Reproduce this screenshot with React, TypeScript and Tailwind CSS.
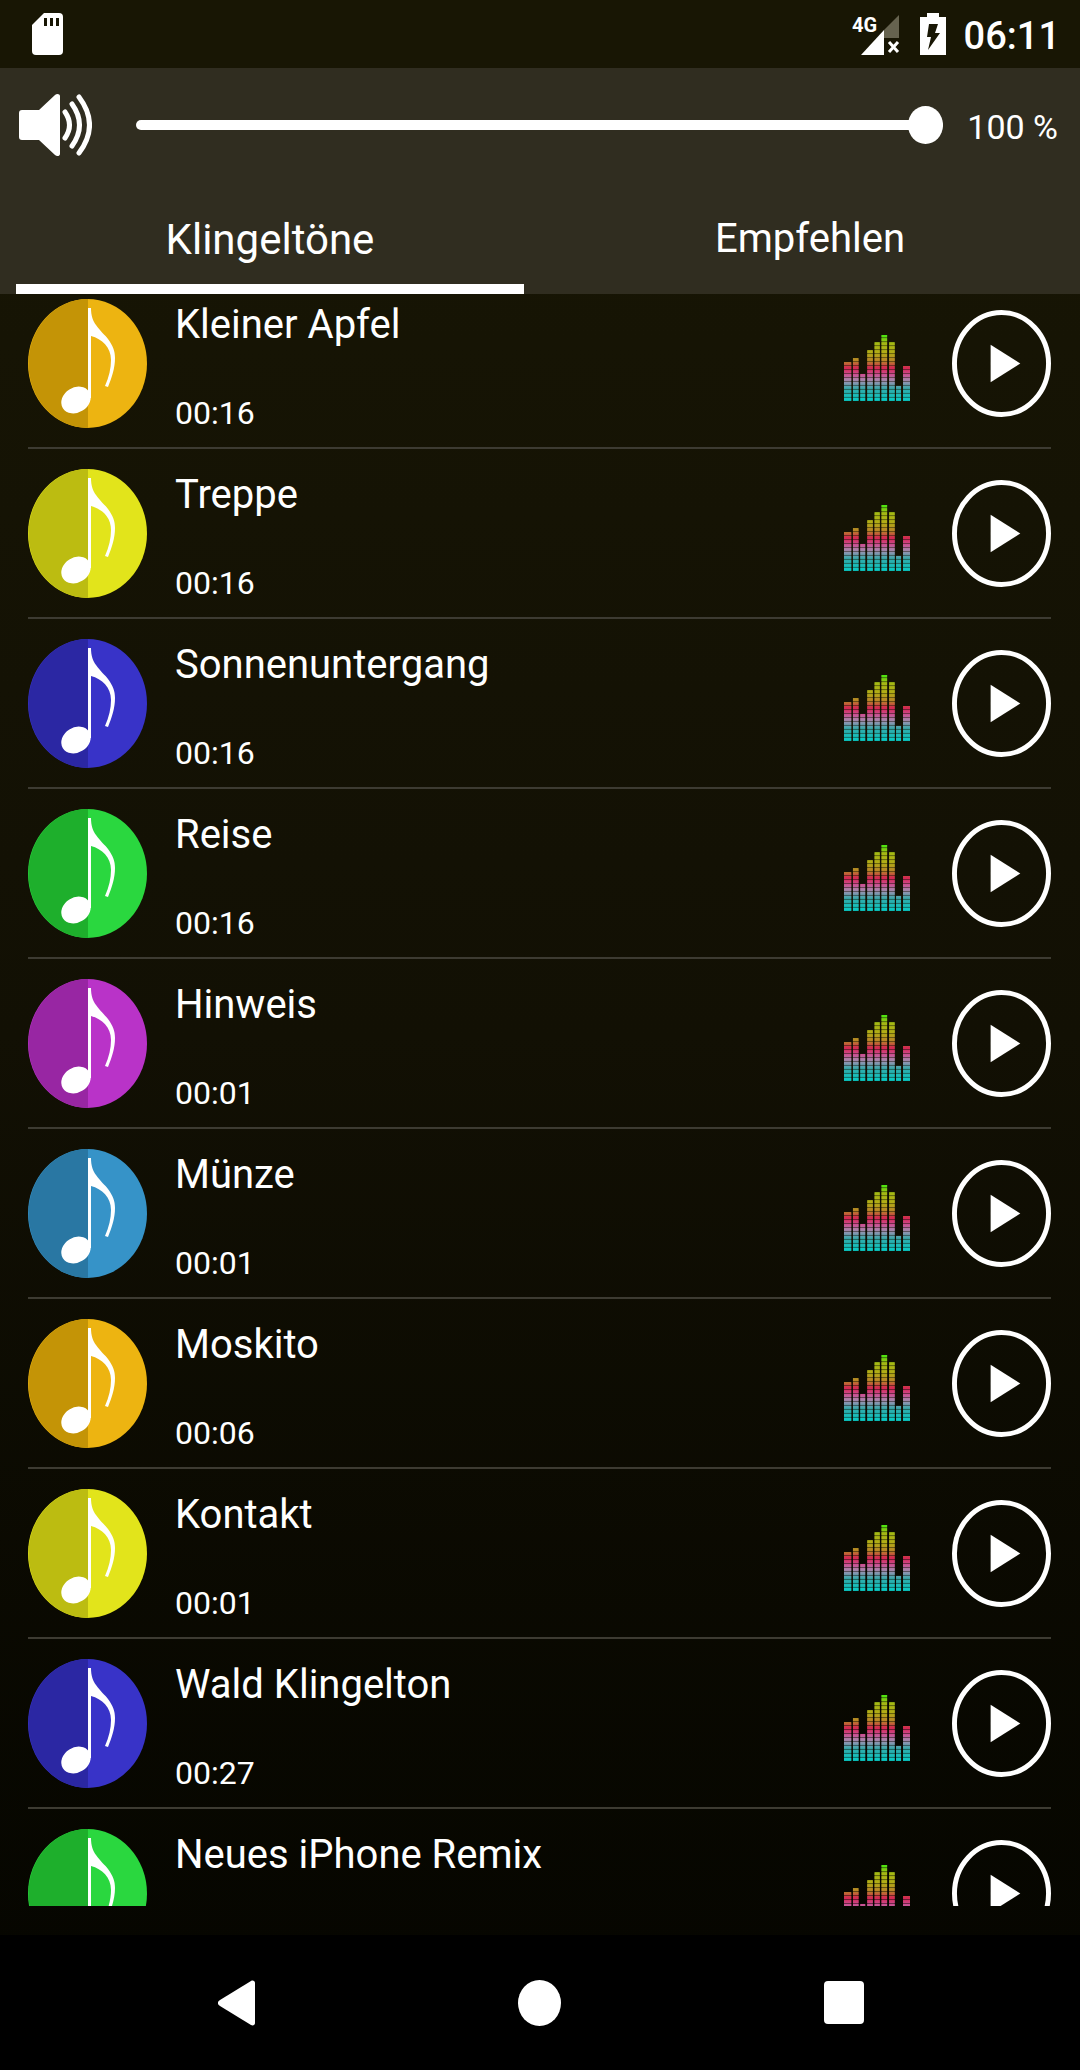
import { useId, useState } from "react";

interface Ringtone {
  name: string;
  duration?: string;
  dark: string;
  light: string;
}

const AMBER = { dark: "#c49406", light: "#edb411" };
const YELLOW = { dark: "#bcbc11", light: "#e2e41b" };
const BLUE = { dark: "#2b27a3", light: "#3833c8" };
const GREEN = { dark: "#1eaf2c", light: "#2ad73f" };
const PURPLE = { dark: "#9826a3", light: "#b933c8" };
const SKY = { dark: "#2977a3", light: "#3693c8" };

const ringtones: Ringtone[] = [
  { name: "Kleiner Apfel", duration: "00:16", ...AMBER },
  { name: "Treppe", duration: "00:16", ...YELLOW },
  { name: "Sonnenuntergang", duration: "00:16", ...BLUE },
  { name: "Reise", duration: "00:16", ...GREEN },
  { name: "Hinweis", duration: "00:01", ...PURPLE },
  { name: "Münze", duration: "00:01", ...SKY },
  { name: "Moskito", duration: "00:06", ...AMBER },
  { name: "Kontakt", duration: "00:01", ...YELLOW },
  { name: "Wald Klingelton", duration: "00:27", ...BLUE },
  { name: "Neues iPhone Remix", ...GREEN },
];

const tabs = ["Klingeltöne", "Empfehlen"];

// x, width, height of every equalizer column
const eqBars = [
  [0, 22, 112],
  [27, 17, 124],
  [49, 15, 80],
  [70, 17, 149],
  [92, 16, 173],
  [113, 17, 198],
  [136, 17, 173],
  [157, 15, 44],
  [178, 21, 102],
];

function StatusBar() {
  return (
    <div className="flex h-[68px] shrink-0 items-center bg-[#181604] pl-8 pr-5">
      <svg className="h-[42px] w-[31px]" viewBox="0 0 31 42" fill="#fff">
        <path d="M12 0h15a4 4 0 0 1 4 4v34a4 4 0 0 1-4 4H4a4 4 0 0 1-4-4V12Z" />
        <path fill="#181604" d="M12 5h3v8h-3zM18 5h3v8h-3zM24 5h3v8h-3z" />
      </svg>
      <div className="ml-auto flex items-center">
        <svg className="h-[42px] w-12" viewBox="0 0 48 42">
          <text x="0" y="19" fontSize="20" fontWeight="700" fontFamily="Roboto, sans-serif" fill="#fff">
            4G
          </text>
          <path fill="#66634f" d="M47 2v23H32V17Z" />
          <path fill="#fff" d="M32 17v25H9Z" />
          <path stroke="#fff" strokeWidth="3" d="m37 29 9 10M46 29l-9 10" />
        </svg>
        <svg className="ml-5 h-[42px] w-[26px]" viewBox="0 0 26 42">
          <path fill="#fff" d="M7 0h12v4h7v38H0V4h7Z" />
          <path fill="#181604" d="M9 11h9l-3 9h5L8 37l3-13H7Z" />
        </svg>
        <span className="ml-[18px] pt-1 text-[38px] font-medium leading-none">06:11</span>
      </div>
    </div>
  );
}

function SpeakerIcon() {
  return (
    <svg className="h-[64px] w-[74px] shrink-0" viewBox="0 0 74 64" fill="none">
      <path
        fill="#fff"
        d="M4 17h17L37 2c2-2 5-1 5 1v58c0 2-3 3-5 1L21 47H4c-2 0-3-1-3-3V20c0-2 1-3 3-3Z"
      />
      <path
        stroke="#fff"
        strokeWidth="5"
        strokeLinecap="round"
        d="M47 19q9 13 0 26M54 11q15 21 0 42M61 4q21 28 0 56"
      />
    </svg>
  );
}

function NoteIcon({ dark, light }: { dark: string; light: string }) {
  return (
    <svg className="h-[129px] w-[119px] shrink-0" viewBox="0 0 119 129">
      <ellipse cx="59.5" cy="64.5" rx="59.5" ry="64.5" fill={light} />
      <path fill={dark} d="M60 0A59.5 64.5 0 0 0 60 129Z" />
      <g fill="#fff">
        <ellipse cx="48" cy="101" rx="15.5" ry="12.5" transform="rotate(-32 48 101)" />
        <path d="M60 9h3c0 8 2 13 5 17 5 7 9 10 12 14 5 7 7 12 7 19 0 10-3 19-7 29l-3-1c4-9 6-18 6-26 0-13-9-21-20-24v62h-3Z" />
      </g>
    </svg>
  );
}

function EqualizerIcon() {
  const id = useId();
  return (
    <svg className="mt-2.5 h-[66px] w-[66px] shrink-0" viewBox="0 0 199 198">
      <defs>
        <linearGradient id={id} gradientUnits="userSpaceOnUse" x1="0" y1="198" x2="0" y2="0">
          <stop offset="0" stopColor="#08ccc6" />
          <stop offset="0.18" stopColor="#30aaaa" />
          <stop offset="0.3" stopColor="#a08fb0" />
          <stop offset="0.4" stopColor="#cc4f92" />
          <stop offset="0.5" stopColor="#d42452" />
          <stop offset="0.6" stopColor="#b8802a" />
          <stop offset="0.72" stopColor="#b3ab16" />
          <stop offset="0.88" stopColor="#a4b814" />
          <stop offset="1" stopColor="#48e810" />
        </linearGradient>
      </defs>
      {eqBars.map(([x, w, h]) => (
        <g key={x}>
          <rect x={x} y={198 - h} width={w} height={h} fill={`url(#${id})`} opacity="0.5" />
          {/* lit segments, drawn upwards from the base line */}
          {Array.from({ length: Math.ceil(h / 12) }, (_, i) => (
            <rect key={i} x={x} y={189 - i * 12} width={w} height="9" fill={`url(#${id})`} />
          ))}
        </g>
      ))}
    </svg>
  );
}

function RingtoneRow({ tone }: { tone: Ringtone }) {
  return (
    <li className="flex h-[170px] items-center border-b-2 border-[#3d3b32]">
      <NoteIcon dark={tone.dark} light={tone.light} />
      <div className="ml-7 flex min-w-0 flex-1 flex-col gap-11 self-start pt-[22px]">
        <span className="truncate text-[40px] leading-[48px]">{tone.name}</span>
        {tone.duration && <span className="text-[32px] leading-10">{tone.duration}</span>}
      </div>
      <EqualizerIcon />
      <button type="button" aria-label={`${tone.name} abspielen`} className="ml-[42px] shrink-0">
        <svg className="h-[107px] w-[99px]" viewBox="0 0 100 108">
          <ellipse cx="50" cy="54" rx="47.5" ry="51.5" fill="none" stroke="#fff" strokeWidth="5" />
          <path fill="#fff" d="M39 35 69 54 39 73Z" />
        </svg>
      </button>
    </li>
  );
}

function NavBar() {
  return (
    <nav className="flex h-[135px] shrink-0 items-center justify-between bg-black pl-[218px] pr-[216px]">
      <button type="button" aria-label="Zurück">
        <svg className="h-[46px] w-[37px]" viewBox="0 0 37 46" fill="#fff">
          <path d="M33 1c2-1 4 0 4 2v40c0 2-2 3-4 2L2 26c-3-2-3-4 0-6Z" />
        </svg>
      </button>
      <button type="button" aria-label="Startbildschirm">
        <svg className="h-[46px] w-[43px]" viewBox="0 0 43 46" fill="#fff">
          <ellipse cx="21.5" cy="23" rx="21.5" ry="23" />
        </svg>
      </button>
      <button type="button" aria-label="Letzte Apps">
        <svg className="h-[43px] w-10" viewBox="0 0 40 43" fill="#fff">
          <rect width="40" height="43" rx="4" />
        </svg>
      </button>
    </nav>
  );
}

export default function App() {
  const [volume, setVolume] = useState(100);
  const [tab, setTab] = useState(tabs[0]);

  return (
    <div className="flex h-screen flex-col bg-linear-to-b from-[#181604] via-[#121004] to-[#050500] font-[Roboto,sans-serif] text-white">
      <StatusBar />

      <header className="shrink-0 bg-[#302d20]">
        <div className="flex items-center pl-[18px] pr-[22px] pt-[25px]">
          <SpeakerIcon />
          <input
            type="range"
            min={0}
            max={100}
            value={volume}
            onChange={(e) => setVolume(Number(e.target.value))}
            aria-label="Lautstärke"
            className="ml-11 h-10 min-w-0 flex-1 appearance-none bg-transparent [&::-webkit-slider-runnable-track]:h-[10px] [&::-webkit-slider-runnable-track]:rounded-full [&::-webkit-slider-runnable-track]:bg-white [&::-webkit-slider-thumb]:-mt-[14px] [&::-webkit-slider-thumb]:h-[38px] [&::-webkit-slider-thumb]:w-[35px] [&::-webkit-slider-thumb]:appearance-none [&::-webkit-slider-thumb]:rounded-[50%] [&::-webkit-slider-thumb]:bg-white"
          />
          <span className="ml-6 pt-1 text-right text-[34px] leading-none">{volume} %</span>
        </div>
        <div role="tablist" className="mt-[23px] flex gap-8 px-4">
          {tabs.map((t) => (
            <button
              key={t}
              type="button"
              role="tab"
              aria-selected={t === tab}
              onClick={() => setTab(t)}
              className={`h-[114px] flex-1 border-b-[10px] pt-3.5 ${
                t === tab ? "border-white text-[42px]" : "border-transparent text-[40px]"
              }`}
            >
              {t}
            </button>
          ))}
        </div>
      </header>

      <main className="mb-[29px] min-h-0 flex-1 overflow-y-auto [scrollbar-width:none]">
        <ul className="-mt-[15px] pl-7 pr-[29px]">
          {ringtones.map((tone) => (
            <RingtoneRow key={tone.name} tone={tone} />
          ))}
        </ul>
      </main>

      <NavBar />
    </div>
  );
}
